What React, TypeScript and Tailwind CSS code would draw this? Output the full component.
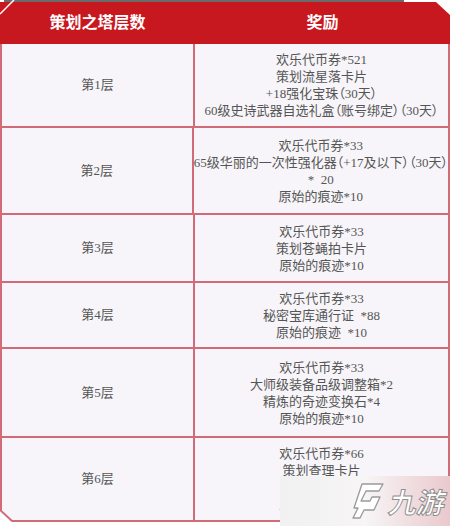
import React from 'react'

type Row = { label: string; h: string; items: string[] }

const rows: Row[] = [
  {
    label: '第1层',
    h: 'h-[84px]',
    items: ['欢乐代币券*521', '策划流星落卡片', '+18强化宝珠（30天）', '60级史诗武器自选礼盒（账号绑定）（30天）'],
  },
  {
    label: '第2层',
    h: 'h-[87px]',
    items: ['欢乐代币券*33', '65级华丽的一次性强化器（+17及以下）（30天）', '*  20', '原始的痕迹*10'],
  },
  {
    label: '第3层',
    h: 'h-[68px]',
    items: ['欢乐代币券*33', '策划苍蝇拍卡片', '原始的痕迹*10'],
  },
  {
    label: '第4层',
    h: 'h-[66px]',
    items: ['欢乐代币券*33', '秘密宝库通行证  *88', '原始的痕迹  *10'],
  },
  {
    label: '第5层',
    h: 'h-[89px]',
    items: ['欢乐代币券*33', '大师级装备品级调整箱*2', '精炼的奇迹变换石*4', '原始的痕迹*10'],
  },
  {
    label: '第6层',
    h: 'h-[84px]',
    items: ['欢乐代币券*66', '策划查理卡片', '奇迹卡片', '原始的痕迹*10'],
  },
]

const font = "font-['Liberation_Serif','Noto_Sans_CJK_SC',serif]"

export default function App() {
  return (
    <div className="relative w-[450px] h-[526px] overflow-hidden bg-white">
      <div className="ml-[4px] h-[2px] w-[400px] bg-[#6b6b6b]" />

      {/* table */}
      <div
        className={`${font} [clip-path:polygon(0_0,100%_0,100%_100%,12px_100%,0_calc(100%-12px))]`}
      >
        <div className="flex h-[42px] bg-[#c8181f] text-[16px] font-bold text-white">
          <div className="flex w-[195px] items-center justify-center">策划之塔层数</div>
          <div className="flex flex-1 items-center justify-center">奖励</div>
        </div>

        <div className="border-x-2 border-[#d06b77] bg-[#f7f5f9]">
          {rows.map(r => (
            <div key={r.label} className={`flex ${r.h} border-b-2 border-[#d06b77]`}>
              <div className="flex w-[193px] items-center justify-center border-r-2 border-[#d06b77] text-[13px] text-[#555]">
                {r.label}
              </div>
              <div className="flex flex-1 flex-col items-center justify-center whitespace-pre text-[13px] leading-[17px] text-[#555] [font-feature-settings:'palt']">
                {r.items.map((t, i) => (
                  <div key={i}>{t}</div>
                ))}
              </div>
            </div>
          ))}
        </div>
      </div>

      {/* corner details */}
      <svg className="absolute left-0 top-0" width="450" height="526" viewBox="0 0 450 526">
        <line x1="0" y1="14" x2="14" y2="0" stroke="#ffffff" strokeWidth="1.5" />
        <polygon points="436,2 450,2 450,15" fill="#ffffff" />
        <line x1="0" y1="510" x2="12" y2="521" stroke="#d06b77" strokeWidth="2" />
      </svg>

      {/* watermark */}
      <div className="absolute left-[280px] top-[476px] flex h-[50px] w-[170px] items-center justify-end gap-1 bg-gradient-to-r from-[#f1f1f2] via-[#f7f5f6] to-[#e9c9cd] pr-1">
        <svg width="36" height="40" viewBox="0 0 36 40">
          <path
            d="M12 3 L33 3 L29 10 L16 10 L11 20 L20 20 L22 16 L30 16 L24 29 L14 29 L10 37 L3 37 L8 27 L4 27 Z"
            fill="#ffffff"
            stroke="#9a9a9a"
            strokeWidth="1.3"
            strokeLinejoin="round"
          />
        </svg>
        <span className="-skew-x-12 font-['Noto_Sans_CJK_SC',sans-serif] text-[28px] font-bold leading-none text-white [-webkit-text-stroke:1px_#8f8f8f]">
          九游
        </span>
      </div>
    </div>
  )
}
